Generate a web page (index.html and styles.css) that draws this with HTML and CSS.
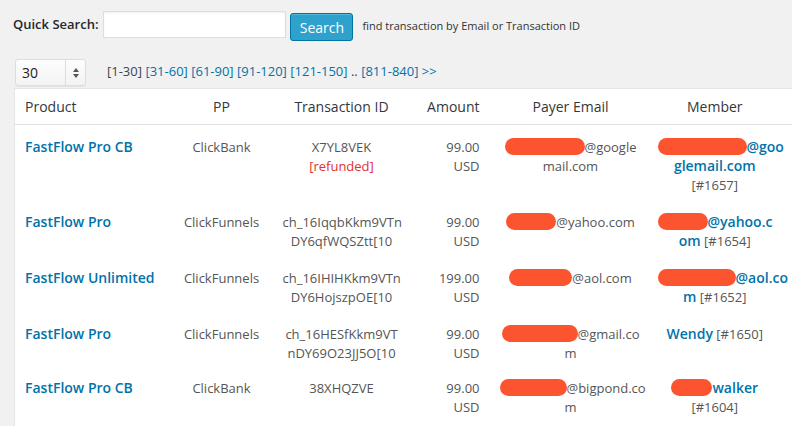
FILE: index.html
```html
<!DOCTYPE html>
<html>
<head>
<meta charset="utf-8">
<link rel="stylesheet" href="styles.css">
</head>
<body>
<div class="search-row">
  <label class="search-label">Quick Search:</label>
  <input class="search-input" type="text">
  <button class="search-btn">Search</button>
  <span class="search-hint">find transaction by Email or Transaction ID</span>
</div>
<div class="paging-row">
  <div class="fake-select">
    <span class="sel-value">30</span>
    <span class="sel-arrow"><svg width="8" height="12" viewBox="0 0 8 12"><path d="M4 1 L7 5 H1 Z M4 11 L7 7 H1 Z" fill="#555"/></svg></span>
  </div>
  <div class="pages"><span class="cur">[1-30]</span> <a>[31-60]</a> <a>[61-90]</a> <a>[91-120]</a> <a>[121-150]</a> .. <a>[811-840]</a> <a>&gt;&gt;</a></div>
</div>
<table class="tx-table">
  <colgroup>
    <col class="c-prod"><col class="c-pp"><col class="c-tx"><col class="c-amt"><col class="c-email"><col class="c-mem">
  </colgroup>
  <thead>
    <tr>
      <th class="left">Product</th>
      <th>PP</th>
      <th>Transaction ID</th>
      <th class="right">Amount</th>
      <th>Payer Email</th>
      <th class="mem-col">Member</th>
    </tr>
  </thead>
  <tbody>
    <tr>
      <td class="left"><a class="title">FastFlow Pro CB</a></td>
      <td>ClickBank</td>
      <td>X7YL8VEK<br><span class="refunded">[refunded]</span></td>
      <td class="right">99.00<br>USD</td>
      <td><span class="r r80"></span>@google<br>mail.com</td>
      <td class="mem-col"><a class="mem"><span class="r r89"></span>@goo<br>glemail.com</a><br>[#1657]</td>
    </tr>
    <tr>
      <td class="left"><a class="title">FastFlow Pro</a></td>
      <td>ClickFunnels</td>
      <td>ch_16IqqbKkm9VTn<br>DY6qfWQSZtt[10</td>
      <td class="right">99.00<br>USD</td>
      <td><span class="r r50"></span>@yahoo.com</td>
      <td class="mem-col"><a class="mem"><span class="r r50"></span>@yahoo.c<br>om</a> [#1654]</td>
    </tr>
    <tr>
      <td class="left"><a class="title">FastFlow Unlimited</a></td>
      <td>ClickFunnels</td>
      <td>ch_16IHIHKkm9VTn<br>DY6HojszpOE[10</td>
      <td class="right">199.00<br>USD</td>
      <td><span class="r r63"></span>@aol.com</td>
      <td class="mem-col"><a class="mem"><span class="r r78"></span>@aol.co<br>m</a> [#1652]</td>
    </tr>
    <tr class="row-tight">
      <td class="left"><a class="title">FastFlow Pro</a></td>
      <td>ClickFunnels</td>
      <td>ch_16HESfKkm9VT<br>nDY69O23JJ5O[10</td>
      <td class="right">99.00<br>USD</td>
      <td><span class="r r76"></span>@gmail.co<br>m</td>
      <td class="mem-col"><a class="mem">Wendy</a> [#1650]</td>
    </tr>
    <tr class="row-last">
      <td class="left"><a class="title">FastFlow Pro CB</a></td>
      <td>ClickBank</td>
      <td>38XHQZVE</td>
      <td class="right">99.00<br>USD</td>
      <td><span class="r r67"></span>@bigpond.co<br>m</td>
      <td class="mem-col"><a class="mem"><span class="r r41"></span>walker</a><br>[#1604]</td>
    </tr>
  </tbody>
</table>
</body>
</html>
```
FILE: styles.css
```css
html, body {
  margin: 0;
  padding: 0;
  background: #f1f1f1;
  overflow: hidden;
}
body {
  font-family: "Open Sans", "Liberation Sans", sans-serif;
  font-size: 13px;
  color: #444;
  line-height: 1.5;
}
.search-row {
  display: flex;
  align-items: flex-start;
  padding: 11px 0 0 13px;
  height: 35px;
}
.search-label {
  font-weight: 600;
  font-size: 13px;
  color: #23282d;
  line-height: 27px;
  margin-right: 5px;
}
.search-input {
  box-sizing: border-box;
  width: 183px;
  height: 27px;
  margin: 0 4px 0 0;
  border: 1px solid #ddd;
  box-shadow: inset 0 1px 2px rgba(0,0,0,0.07);
  background: #fff;
  padding: 0;
}
.search-btn {
  box-sizing: border-box;
  margin: 2px 9px 0 0;
  width: 63px;
  height: 28px;
  background: #2ea2cc;
  border: 1px solid #0074a2;
  border-radius: 3px;
  color: #fff;
  font-family: "Open Sans", "Liberation Sans", sans-serif;
  font-size: 14px;
  padding: 0;
  box-shadow: inset 0 1px 0 rgba(120,200,230,0.5);
}
.search-hint {
  font-size: 11px;
  color: #333;
  line-height: 29px;
}
.paging-row {
  display: flex;
  align-items: flex-start;
  padding: 13px 0 0 15px;
  height: 27px;
}
.fake-select {
  box-sizing: border-box;
  display: flex;
  width: 71px;
  height: 27px;
  border: 1px solid #ddd;
  border-radius: 3px;
  background: linear-gradient(#fdfdfd, #f3f3f3);
  box-shadow: 0 1px 1px rgba(0,0,0,0.06);
  margin-right: 21px;
}
.sel-value {
  flex: 1;
  font-size: 14px;
  color: #222;
  padding-left: 6px;
  line-height: 25px;
}
.sel-arrow {
  width: 19px;
  border-left: 1px solid #ddd;
  display: flex;
  align-items: center;
  justify-content: center;
}
.pages {
  font-size: 13px;
  color: #444;
  line-height: 25px;
}
.pages a {
  color: #0073aa;
}
.tx-table {
  margin: 2px 0 0 14px;
  width: 778px;
  table-layout: fixed;
  border-collapse: collapse;
  background: #fff;
  border: 1px solid #e5e5e5;
}
.c-prod { width: 156px; }
.c-pp { width: 102px; }
.c-tx { width: 138px; }
.c-amt { width: 79px; }
.c-email { width: 162px; }
.c-mem { width: 141px; }
.tx-table th {
  font-weight: 400;
  font-size: 14px;
  color: #32373c;
  padding: 8px 10px 8px;
  text-align: center;
  line-height: 19px;
  border-bottom: 1px solid #e1e1e1;
}
.tx-table td {
  vertical-align: top;
  text-align: center;
  padding: 13px 10px 5px;
  line-height: 19px;
  color: #555;
  white-space: nowrap;
}
.tx-table .row-tight td { padding-bottom: 3px; }
.tx-table .row-last td { padding-bottom: 14px; }
.tx-table .left { text-align: left; }
.tx-table .right { text-align: right; }
.tx-table .mem-col { padding-right: 20px; padding-left: 6px; }
.title {
  font-weight: 600;
  font-size: 14px;
  line-height: 1;
  color: #0073aa;
}
.mem {
  font-weight: 600;
  font-size: 14px;
  line-height: 1;
  color: #0073aa;
}
.refunded {
  color: #dc3232;
}
.r {
  display: inline-block;
  height: 17px;
  border-radius: 9px;
  background: #fd5430;
  vertical-align: -3px;
}
.r41 { width: 41px; }
.r50 { width: 50px; }
.r63 { width: 63px; }
.r67 { width: 67px; }
.r76 { width: 76px; }
.r78 { width: 78px; }
.r80 { width: 80px; }
.r89 { width: 89px; }
```
